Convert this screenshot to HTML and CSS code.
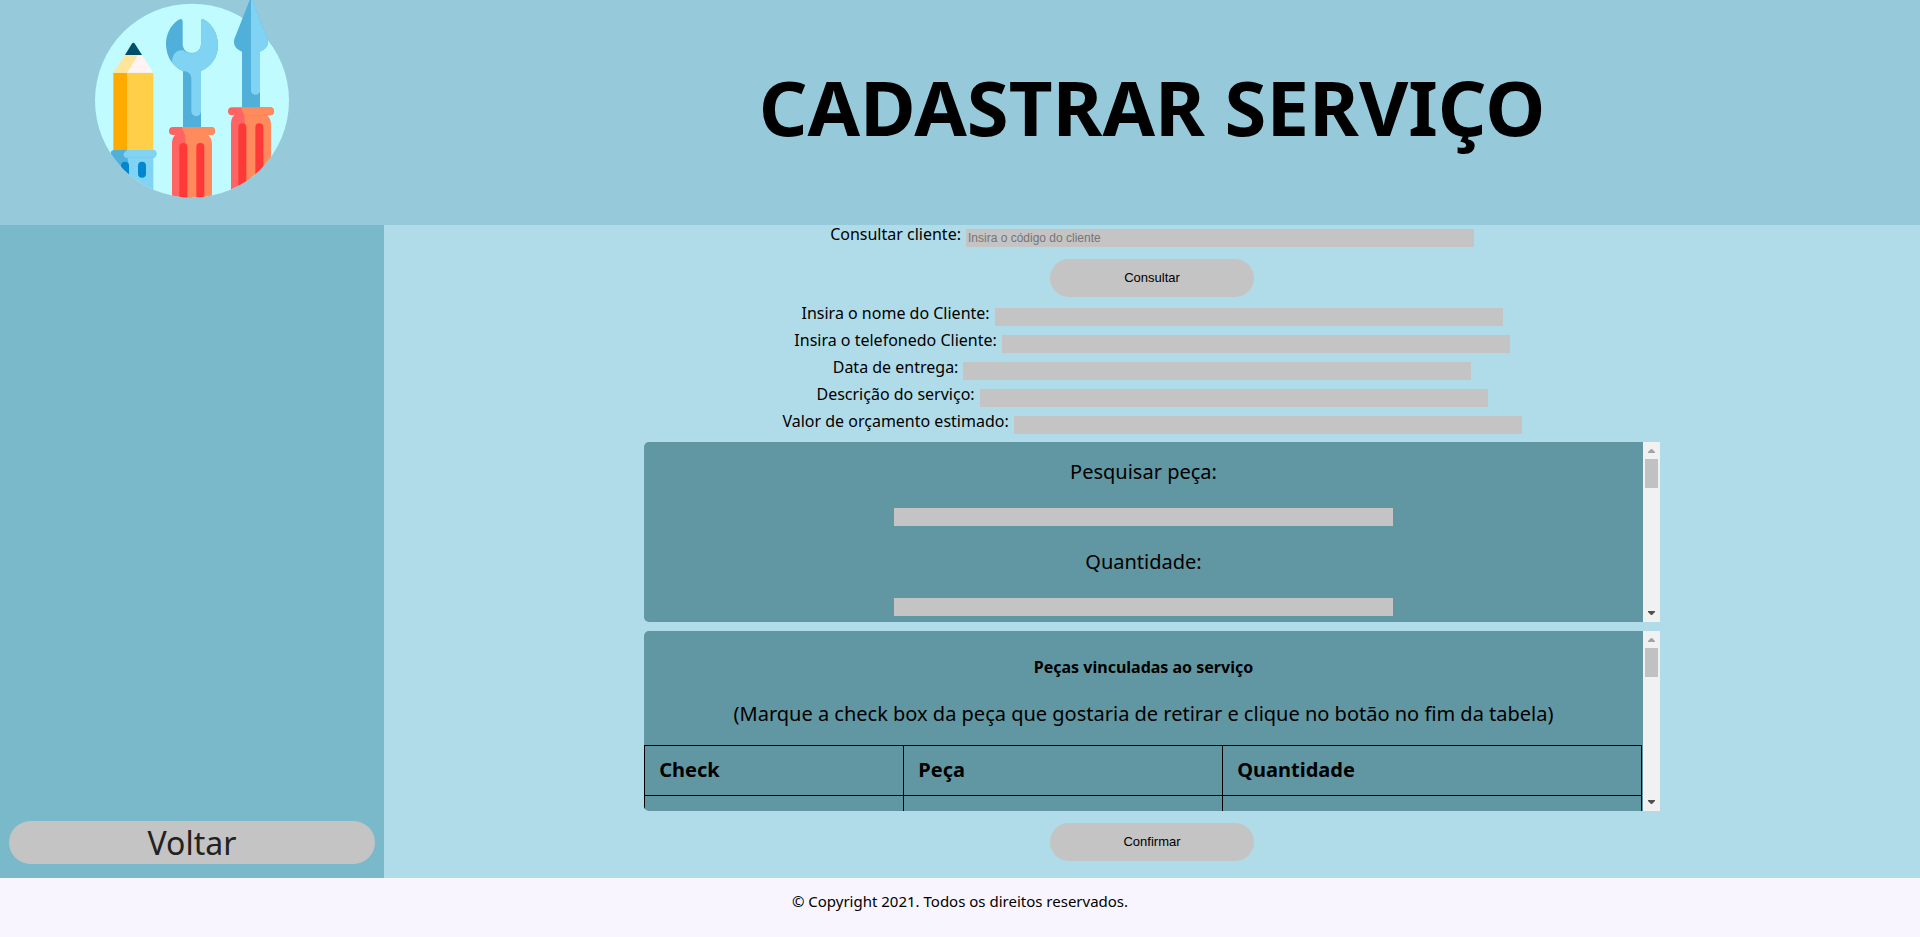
FILE: index.html
```html
<!DOCTYPE html>
<html lang="pt-BR">
<head>
<meta charset="utf-8">
<meta name="viewport" content="width=device-width, initial-scale=1">
<title>Cadastrar Serviço</title>
<link rel="stylesheet" href="styles.css">
</head>
<body>
<header class="header">
  <div class="brand">
    <svg class="logo" viewBox="0 0 672 600" role="img" aria-label="Ferramentas">
      <defs>
        <clipPath id="disc"><path d="M0 0H672V302H627A291 291 0 0 1 45 302H0Z"/></clipPath>
        <g id="handle">
          <path fill="#ff6465" d="M-50 12H0V300H-60V50Q-60 32-50 24Z"/>
          <path fill="#ff8a5b" d="M-20 12H48V24Q60 34 60 52V300H-22Z"/>
          <rect x="-69" y="0" width="138" height="24" rx="12" fill="#ff6465"/>
          <path fill="#ff8a5b" d="M-29 0H57A12 12 0 0 1 57 24H-20Q-30 14-29 0Z"/>
          <path fill="#ff6465" d="M-29 12Q-19 22-19 52L-24 60V12Z"/>
          <path fill="#ff3838" d="M-38 300V60A12 12 0 0 1-14 60V300ZM13 300V60A12 12 0 0 1 37 60V300Z"/>
        </g>
      </defs>
      <circle cx="336" cy="302" r="291" fill="#c0fbff"/>
      <g clip-path="url(#disc)">
        <path fill="#ffaa00" d="M100 218H142V450H100Z"/>
        <path fill="#ffcf4a" d="M141 218H220V450H141Z"/>
        <path fill="#ffe49c" d="M135 165H174L142 218H100Z"/>
        <path fill="#fff4f2" d="M174 165H186L220 218H142Z"/>
        <path fill="#004f68" d="M135 165L155 132Q160 125 165 132L186 165Z"/>
        <path fill="#50b0d9" d="M100 460H150V620H100Z"/>
        <path fill="#80d3f3" d="M140 460H220V620H147V500Z"/>
        <rect x="92" y="450" width="137" height="23" rx="11" fill="#50b0d9"/>
        <path fill="#80d3f3" d="M142 450H218A11 11 0 0 1 218 473H136Q122 462 142 450Z"/>
        <path fill="#0087cf" d="M123 620V497A12 12 0 0 1 147 497V620Z"/>
        <path fill="#80d3f3" d="M147 522L190 560V620H147Z"/>
        <rect x="174" y="485" width="24" height="48" rx="12" fill="#0087cf"/>
        <path fill="#50b0d9" d="M308 64Q307 53 296 59C270 76 257 105 258 135C260 172 278 200 309 213V385H363V213C394 199 414 172 414 135C414 104 399 74 373 59Q363 53 363 66V131C363 168 308 168 308 131Z"/>
        <path fill="#80d3f3" d="M363 66Q363 53 373 59C399 74 414 104 414 135C414 172 394 199 363 213V334A14 14 0 0 1 334 334V234Q332 214 309 213Q290 205 276 187C276 163 290 148 310 151C327 166 363 163 363 131Z"/>
        <use href="#handle" x="336" y="381"/>
        <path fill="#50b0d9" d="M508 3Q513-7 518 3L562 116Q571 142 540 155V323H486V155Q456 143 463 117Z"/>
        <path fill="#80d3f3" d="M513-3Q516-1 518 3L562 116Q571 142 540 155V274A14 14 0 0 1 513 274Z"/>
        <use href="#handle" x="513" y="322"/>
      </g>
    </svg>
  </div>
  <h1 class="title">CADASTRAR SERVIÇO</h1>
</header>
<div class="content">
  <aside class="sidebar">
    <a class="back" href="#">Voltar</a>
  </aside>
  <main class="main">
    <form class="form">
      <div class="field">
        <label for="codigo">Consultar cliente:</label>
        <input class="input" id="codigo" type="text" placeholder="Insira o código do cliente">
      </div>
      <button class="button" type="button">Consultar</button>
      <div class="fields">
        <div class="field"><label for="nome">Insira o nome do Cliente:</label><input class="input" id="nome" type="text"></div>
        <div class="field"><label for="telefone">Insira o telefonedo Cliente:</label><input class="input" id="telefone" type="text"></div>
        <div class="field"><label for="data">Data de entrega:</label><input class="input" id="data" type="text"></div>
        <div class="field"><label for="descricao">Descrição do serviço:</label><input class="input" id="descricao" type="text"></div>
        <div class="field"><label for="valor">Valor de orçamento estimado:</label><input class="input" id="valor" type="text"></div>
      </div>
      <section class="panel">
        <div class="panel-body search">
          <label for="peca">Pesquisar peça:</label>
          <input class="input" id="peca" type="text">
          <label for="quantidade">Quantidade:</label>
          <input class="input" id="quantidade" type="text">
        </div>
        <div class="scrollbar" aria-hidden="true">
          <svg class="arrow" viewBox="0 0 17 17"><path fill="#a3a3a3" d="M5 11V10L8 7H9L12 10V11Z"/></svg>
          <div class="thumb"></div>
          <svg class="arrow arrow-down" viewBox="0 0 17 17"><path fill="#505050" d="M5 6H12V7L9 10H8L5 7Z"/></svg>
        </div>
      </section>
      <section class="panel">
        <div class="panel-body">
          <h2 class="panel-title">Peças vinculadas ao serviço</h2>
          <p class="hint">(Marque a check box da peça que gostaria de retirar e clique no botão no fim da tabela)</p>
          <table class="parts">
            <thead><tr><th class="col-check">Check</th><th class="col-part">Peça</th><th>Quantidade</th></tr></thead>
            <tbody><tr><td></td><td></td><td></td></tr></tbody>
          </table>
        </div>
        <div class="scrollbar" aria-hidden="true">
          <svg class="arrow" viewBox="0 0 17 17"><path fill="#a3a3a3" d="M5 11V10L8 7H9L12 10V11Z"/></svg>
          <div class="thumb"></div>
          <svg class="arrow arrow-down" viewBox="0 0 17 17"><path fill="#505050" d="M5 6H12V7L9 10H8L5 7Z"/></svg>
        </div>
      </section>
      <button class="button" type="submit">Confirmar</button>
    </form>
  </main>
</div>
<footer class="footer">© Copyright 2021. Todos os direitos reservados.</footer>
</body>
</html>
```
FILE: styles.css
```css
* {
  box-sizing: border-box;
}

body {
  margin: 0;
  min-height: 100vh;
  display: grid;
  grid-template-rows: 24vh 1fr auto;
  font-family: "Noto Sans", "Open Sans", sans-serif;
  font-size: 16px;
  line-height: 18px;
  color: #000;
  background: #f8f5ff;
}

.header,
.content {
  display: grid;
  grid-template-columns: 20% 1fr;
}

.header {
  background: #96cada;
}

.brand {
  display: flex;
  justify-content: center;
}

.logo {
  width: 224px;
  height: 200px;
}

.title {
  margin: 0;
  padding-bottom: 10px;
  align-self: center;
  text-align: center;
  font-size: 76px;
  line-height: 80px;
}

.sidebar {
  display: flex;
  align-items: flex-end;
  padding: 14px 9px;
  background: #79b9ca;
}

.back {
  flex: 1;
  border-radius: 22px;
  background: #c4c4c4;
  color: #222;
  font-size: 32px;
  line-height: 43px;
  text-align: center;
  text-decoration: none;
}

.main {
  background: #b0dce9;
}

.form {
  display: flex;
  flex-direction: column;
  align-items: center;
}

.field {
  display: flex;
  justify-content: center;
  gap: 5px;
  width: 100%;
  height: 22px;
}

.fields {
  display: flex;
  flex-direction: column;
  gap: 5px;
  width: 100%;
  margin: 7px 0 8px;
}

.input {
  width: calc(33% + 1px);
  height: 18px;
  padding: 0 2px;
  border: 0;
  border-radius: 0;
  background: #c4c4c4;
  font-family: "Liberation Sans", Arial, sans-serif;
  font-size: 12px;
}

.input::placeholder {
  color: #757575;
}

.field .input {
  align-self: flex-end;
}

.button {
  width: 204px;
  height: 38px;
  margin: 12px 0 0;
  border: 0;
  border-radius: 19px;
  background: #c4c4c4;
  color: #000;
  font-family: "Liberation Sans", Arial, sans-serif;
  font-size: 13px;
}

.panel {
  display: flex;
  width: calc(66% + 2px);
  height: 180px;
  border-radius: 5px 0 0 5px;
  background: #6197a3;
  overflow: hidden;
}

.panel + .panel {
  margin-top: 9px;
}

.panel-body {
  flex: 1;
  overflow: auto;
  scrollbar-width: none;
  font-size: 20px;
  line-height: 24px;
  text-align: center;
}

.search {
  display: flex;
  flex-direction: column;
  align-items: center;
  gap: 24px;
  padding: 18px 0;
}

.search label,
.search .input {
  flex: none;
}

.search .input {
  width: 50%;
}

.panel-title {
  margin: 24px 0 0;
  font-size: 16px;
  line-height: 24px;
}

.hint {
  margin: 23px 0 19px;
}

.parts {
  width: calc(100% - 1px);
  border-collapse: collapse;
  table-layout: fixed;
}

.parts th,
.parts td {
  height: 50px;
  padding: 0 14px;
  border: 1px solid #000;
  text-align: left;
}

.col-check {
  width: 26%;
}

.col-part {
  width: 32%;
}

.scrollbar {
  display: flex;
  flex-direction: column;
  width: 17px;
  background: #f1f1f1;
}

.arrow {
  width: 17px;
  height: 17px;
}

.thumb {
  height: 29px;
  margin: 0 2px;
  background: #c1c1c1;
}

.arrow-down {
  margin-top: auto;
}

.footer {
  padding: 14px 0 27px;
  font-size: 15px;
  text-align: center;
}
```
